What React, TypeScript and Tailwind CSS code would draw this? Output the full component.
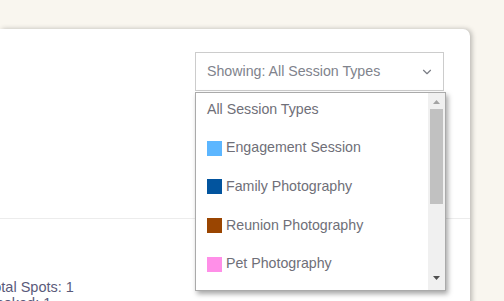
import { ChevronDown } from 'lucide-react'

const types = [
  { label: 'Engagement Session', color: 'bg-[#5cb6ff]' },
  { label: 'Family Photography', color: 'bg-[#02549e]' },
  { label: 'Reunion Photography', color: 'bg-[#9a4501]' },
  { label: 'Pet Photography', color: 'bg-[#ff8fe8]' },
  { label: 'Headshots', color: 'bg-[#3a9a4a]' },
]

export default function App() {
  return (
    <div className="h-[301px] overflow-hidden bg-[#f9f6ef] pt-[29px] font-['Liberation_Sans',sans-serif]">
      <div className="w-[470px] h-[400px] bg-white rounded-tr-[7px] shadow-[2px_0_5px_rgba(0,0,0,0.25)]">
        {/* Header */}
        <div className="h-[190px] border-b border-[#ececec] flex justify-end pr-[26px] pt-[23px]">
          <div className="relative w-[249px] h-[39px] border border-[#cccccc] flex items-center pl-[11px] pr-[9px]">
            <span className="flex-1 text-[14.2px] text-[#80838c]">Showing: All Session Types</span>
            <ChevronDown className="w-[14px] h-[14px] text-[#7a7d85]" strokeWidth={2} />

            {/* Open list */}
            <div className="absolute left-[-1px] top-[39px] w-[251px] h-[199px] bg-white border border-[#aaaaaa] shadow-[2px_3px_5px_rgba(0,0,0,0.35)] flex overflow-hidden">
              <ul className="flex-1 mt-[-3px] pl-[11px] text-[14.2px] text-[#6f6f78]">
                <li className="h-[38.7px] flex items-center">All Session Types</li>
                {types.map((t) => (
                  <li key={t.label} className="h-[38.7px] flex items-center gap-[4px]">
                    <span className={`w-[15px] h-[15px] ${t.color}`} />
                    {t.label}
                  </li>
                ))}
              </ul>
              <div className="w-[17px] bg-[#f0f0f0] flex flex-col items-center">
                <svg width="9" height="15" viewBox="0 0 9 15" className="mt-[1px]">
                  <path d="M1 10 L4.5 6 L8 10 Z" fill="#a3a3a3" />
                </svg>
                <div className="w-[13px] h-[95px] bg-[#c1c1c1]" />
                <div className="flex-1" />
                <svg width="9" height="16" viewBox="0 0 9 16" className="mb-[3px]">
                  <path d="M1 5 L8 5 L4.5 9 Z" fill="#505050" />
                </svg>
              </div>
            </div>
          </div>
        </div>

        {/* Body */}
        <div className="pt-[60px] ml-[-14px] text-[14.5px] leading-[16px] text-[#5a5a7a]">
          <p>Total Spots: 1</p>
          <p>Booked: 1</p>
        </div>
      </div>
    </div>
  )
}
